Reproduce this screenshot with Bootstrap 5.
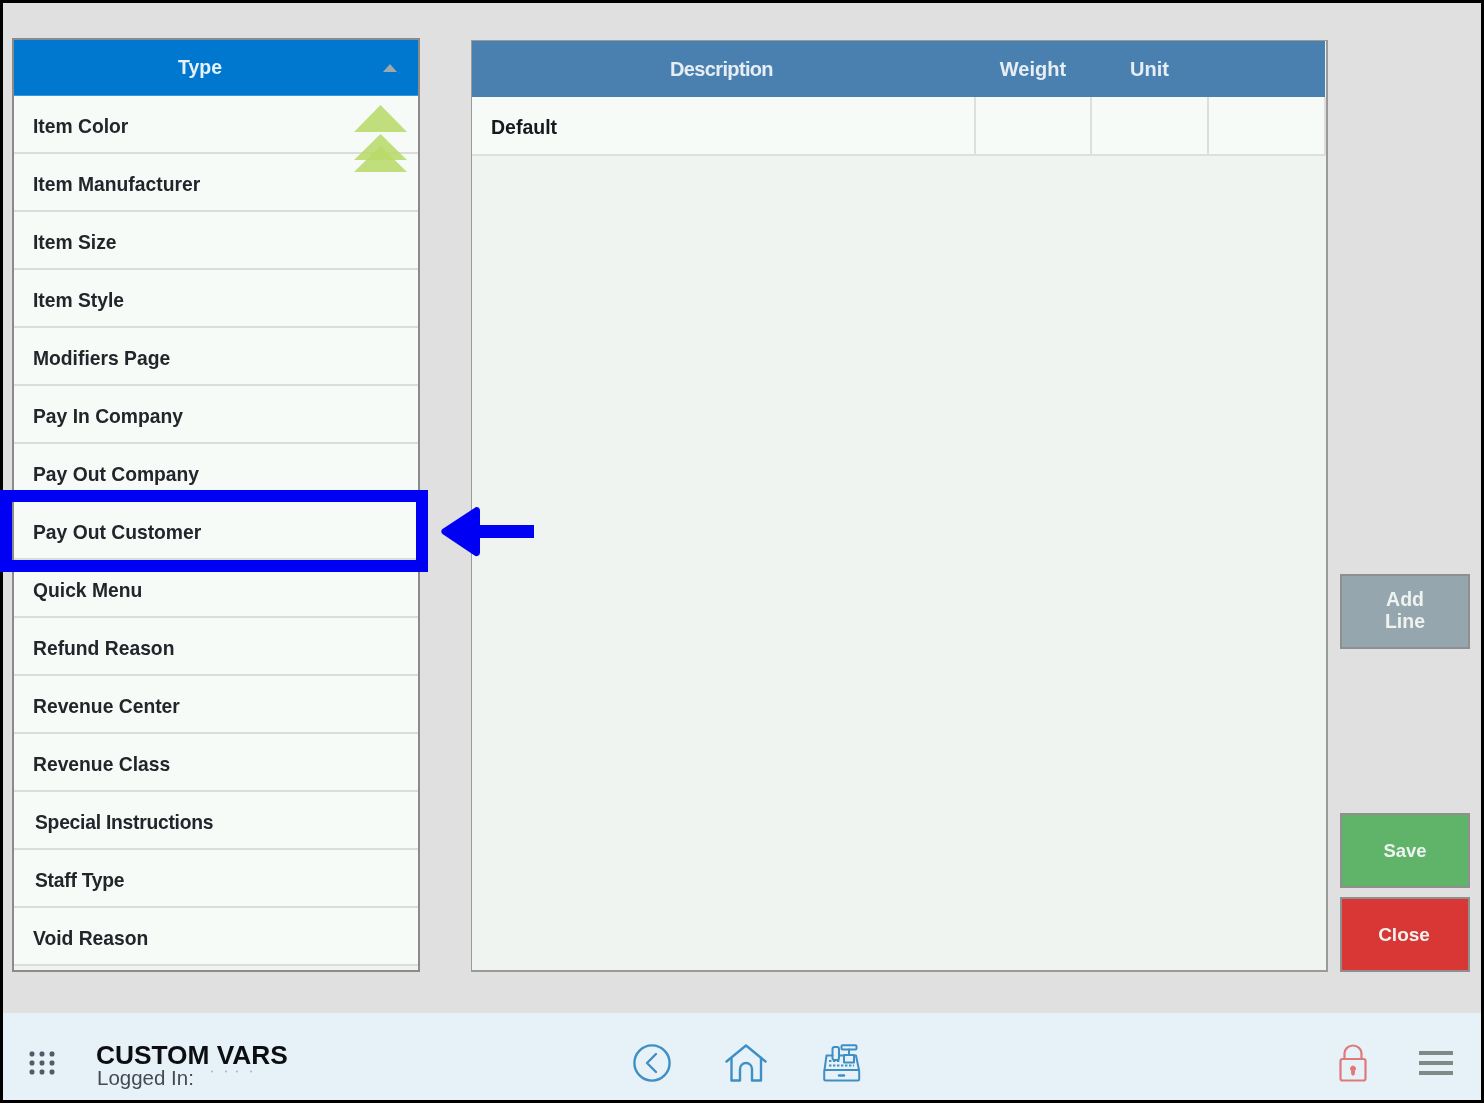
<!DOCTYPE html>
<html lang="en">
<head>
<meta charset="utf-8">
<title>Custom Vars</title>
<link href="https://cdn.jsdelivr.net/npm/bootstrap@5.3.0/dist/css/bootstrap.min.css" rel="stylesheet">
<style>
html,body{margin:0;height:100%;background:#e0e0e0;overflow:hidden}
body{font-family:"Liberation Sans",Arial,sans-serif}
.app-frame{position:relative;width:1484px;height:1103px;border:3px solid #000;background:#e0e0e0;display:flex;flex-direction:column;filter:blur(.45px)}
.app-main{height:1010px;padding:35px 10px 0 9px;display:flex;align-items:flex-start}
.type-panel{position:relative;width:408px;height:934px;border:2px solid #8b8b8b;background:#f0f3ef;flex:none}
.type-head{height:56px;background:#0078d0;color:#e8f1f8;font-weight:700;font-size:19.5px;display:flex;align-items:center;justify-content:center;padding-right:32px;position:relative;border-bottom:1px solid #3a96dc}
.sort-mark{position:absolute;right:21px;top:24px;width:0;height:0;border-left:7px solid transparent;border-right:7px solid transparent;border-bottom:8px solid #a0a9a8}
.type-list{border-radius:0}
.type-list .list-group-item{height:58px;background:#f7fbf8;border:0;border-bottom:2px solid #dcdcdc;border-radius:0;padding:6px 0 0 19px;display:flex;align-items:center;font-weight:700;font-size:19.3px;color:#23252b}
.type-list .list-group-item.shifted{padding-left:21px;letter-spacing:-.25px}
.scroll-hint{position:absolute;left:340px;top:65px}
.var-panel{width:857px;height:932px;margin:2px 12px 0 51px;border:2px solid #9a9a9a;border-top-width:1px;border-left-width:1px;background:#f0f4f0;flex:none}
.var-table{width:853px;table-layout:fixed;margin:0;border-collapse:collapse}
.var-table th{height:56px;background:#4a80b0;color:#e6eef4;font-size:20px;font-weight:700;text-align:center;border:0;padding:0;vertical-align:middle}
.var-table th.narrow-head{letter-spacing:-.65px;padding-right:4px}
.var-table td{height:58px;background:#f7fbf8;border:0;border-right:2px solid #dedede;border-bottom:2px solid #dedede;padding:4px 0 0 19px;font-size:19.5px;font-weight:700;color:#17191d;vertical-align:middle}
.side-col{width:130px;height:934px;display:flex;flex-direction:column;flex:none}
.act-btn{width:130px;height:75px;border-radius:0;border:2px solid #8f8f8f;color:#eef3f0;font-size:19.5px;font-weight:700;line-height:22px;padding:0;display:flex;align-items:center;justify-content:center;text-align:center}
.act-add{background:#96a6af;margin-top:536px;padding-bottom:3px}
.act-save{background:#5fb46a;margin-top:164px;font-size:18.5px}
.act-close{background:#d93636;margin-top:9px;padding-right:2px;font-size:19px}
.act-btn:hover{color:#eef3f0}
.app-foot{height:87px;background:#e6f2f8;display:flex;align-items:center;position:relative;flex:none}
.foot-grid{margin:13px 0 0 26px;flex:none}
.foot-title{margin-left:41px;width:420px;flex:none;padding-top:17px}
.foot-name{font-size:26.3px;font-weight:700;line-height:26px;color:#0c0e12}
.foot-user{font-size:20.5px;line-height:21px;color:#444a52;margin:-1px 0 0 1px;display:flex;align-items:flex-start}
.foot-user svg{margin:3px 0 0 16px}
.foot-mid{display:flex;align-items:center;flex:none;margin-left:116px;padding-top:13px}
.foot-right{display:flex;align-items:center;margin-left:auto;padding:13px 28px 0 0}
.menu-bars{width:34px;display:flex;flex-direction:column;gap:6px;margin-left:52px}
.menu-bars span{display:block;height:4px;background:#7e8a85}
.call-box{position:absolute;left:-3px;top:487px;width:428px;height:82px;border:12px solid #0000f5;pointer-events:none}
.call-arrow{position:absolute;left:436px;top:502px}
</style>
</head>
<body>
<div class="app-frame">
  <div class="app-main">
    <div class="type-panel">
      <div class="type-head">Type<span class="sort-mark"></span></div>
      <ul class="list-group type-list">
        <li class="list-group-item">Item Color</li>
        <li class="list-group-item">Item Manufacturer</li>
        <li class="list-group-item">Item Size</li>
        <li class="list-group-item">Item Style</li>
        <li class="list-group-item">Modifiers Page</li>
        <li class="list-group-item">Pay In Company</li>
        <li class="list-group-item">Pay Out Company</li>
        <li class="list-group-item">Pay Out Customer</li>
        <li class="list-group-item">Quick Menu</li>
        <li class="list-group-item">Refund Reason</li>
        <li class="list-group-item">Revenue Center</li>
        <li class="list-group-item">Revenue Class</li>
        <li class="list-group-item shifted">Special Instructions</li>
        <li class="list-group-item shifted">Staff Type</li>
        <li class="list-group-item">Void Reason</li>
      </ul>
      <svg class="scroll-hint" width="53" height="67" viewBox="0 0 53 67" aria-hidden="true">
        <g fill="#b8da6a" fill-opacity=".88">
          <polygon points="26.5,0 53,27 0,27"/>
          <polygon points="26.5,29 53,55 0,55"/>
          <polygon points="26.5,41 53,67 0,67"/>
        </g>
      </svg>
    </div>
    <div class="var-panel">
      <table class="table var-table">
        <colgroup><col style="width:503px"><col style="width:116px"><col style="width:117px"><col style="width:117px"></colgroup>
        <thead><tr><th class="narrow-head">Description</th><th>Weight</th><th>Unit</th><th></th></tr></thead>
        <tbody><tr><td>Default</td><td></td><td></td><td></td></tr></tbody>
      </table>
    </div>
    <div class="side-col">
      <button type="button" class="btn act-btn act-add">Add<br>Line</button>
      <button type="button" class="btn act-btn act-save">Save</button>
      <button type="button" class="btn act-btn act-close">Close</button>
    </div>
  </div>
  <div class="app-foot">
    <svg class="foot-grid" width="26" height="24" viewBox="0 0 26 24" aria-hidden="true" fill="#4e5d68">
      <rect x=".6" y=".6" width="4.8" height="4.8" rx="1.6"/><rect x="10.6" y=".6" width="4.8" height="4.8" rx="1.6"/><rect x="20.6" y=".6" width="4.8" height="4.8" rx="1.6"/>
      <rect x=".6" y="9.6" width="4.8" height="4.8" rx="1.6"/><rect x="10.6" y="9.6" width="4.8" height="4.8" rx="1.6"/><rect x="20.6" y="9.6" width="4.8" height="4.8" rx="1.6"/>
      <rect x=".6" y="18.6" width="4.8" height="4.8" rx="1.6"/><rect x="10.6" y="18.6" width="4.8" height="4.8" rx="1.6"/><rect x="20.6" y="18.6" width="4.8" height="4.8" rx="1.6"/>
    </svg>
    <div class="foot-title">
      <div class="foot-name">CUSTOM VARS</div>
      <div class="foot-user">Logged In:<svg width="44" height="3" viewBox="0 0 44 3" fill="#a9b4bd" aria-hidden="true"><circle cx="2" cy="1.5" r="1"/><circle cx="16" cy="1.5" r="1"/><circle cx="27" cy="1.5" r="1"/><circle cx="41" cy="1.5" r="1"/></svg></div>
    </div>
    <div class="foot-mid">
      <svg width="40" height="40" viewBox="0 0 40 40" fill="none" stroke="#3f8fc4" stroke-width="2.4" aria-hidden="true">
        <circle cx="20" cy="20" r="17.6"/><path d="M24 11 L15 20 L24 29" stroke-linecap="round" stroke-linejoin="round"/>
      </svg>
      <svg style="margin-left:53px" width="42" height="38" viewBox="0 0 42 38" fill="none" stroke="#3f8fc4" stroke-width="2.4" stroke-linejoin="round" stroke-linecap="round" aria-hidden="true">
        <path d="M1.5 17.5 L21 1.5 L40.5 17.5"/><path d="M6.5 14 V36.5 H15 V25 a6 6 0 0 1 12 0 V36.5 H36 V14"/>
      </svg>
      <svg style="margin-left:56px" width="38" height="38" viewBox="0 0 38 38" fill="none" stroke="#3f8fc4" stroke-width="2" stroke-linejoin="round" stroke-linecap="round" aria-hidden="true">
        <rect x="18.5" y="1.2" width="15" height="4.3" rx="1"/><path d="M26 5.5 V11"/><rect x="21" y="11" width="10" height="7.5"/>
        <rect x="9.5" y="3" width="6.5" height="13" rx="2"/>
        <path d="M1.5 26 L3.5 11.5 H9.5 M16 11.5 H21 M31 11.5 H33 L36 26"/>
        <path d="M6 17 H18 M6 21.5 H31" stroke-dasharray="2.4 1.6" stroke-linecap="butt"/>
        <rect x="1.2" y="26" width="35" height="10.5" rx="1.5"/><path d="M16 31.5 H21" stroke-width="2.4"/>
      </svg>
    </div>
    <div class="foot-right">
      <svg width="28" height="38" viewBox="0 0 28 38" fill="none" stroke="#e07a7a" stroke-width="2.2" aria-hidden="true">
        <path d="M5.5 15 V9.5 a8.5 8 0 0 1 17 0 V15"/>
        <rect x="1.5" y="15" width="25" height="21.5" rx="2"/>
        <path d="M14 22 a2.6 2.6 0 0 1 1.6 4.6 L15 31 H13 L12.4 26.6 A2.6 2.6 0 0 1 14 22 Z" fill="#e07a7a" stroke-width="1"/>
      </svg>
      <div class="menu-bars"><span></span><span></span><span></span></div>
    </div>
  </div>
  <div class="call-box"></div>
  <svg class="call-arrow" width="96" height="54" viewBox="0 0 96 54" aria-hidden="true" fill="#0000f5">
    <path d="M37 2 a3.5 3.5 0 0 1 4 3.5 V20 H95 V33 H41 V47.5 a3.5 3.5 0 0 1-5.5 3 L3.5 29 a3.2 3.2 0 0 1 0-5 Z"/>
  </svg>
</div>
<script src="https://cdn.jsdelivr.net/npm/bootstrap@5.3.0/dist/js/bootstrap.bundle.min.js"></script>
</body>
</html>
